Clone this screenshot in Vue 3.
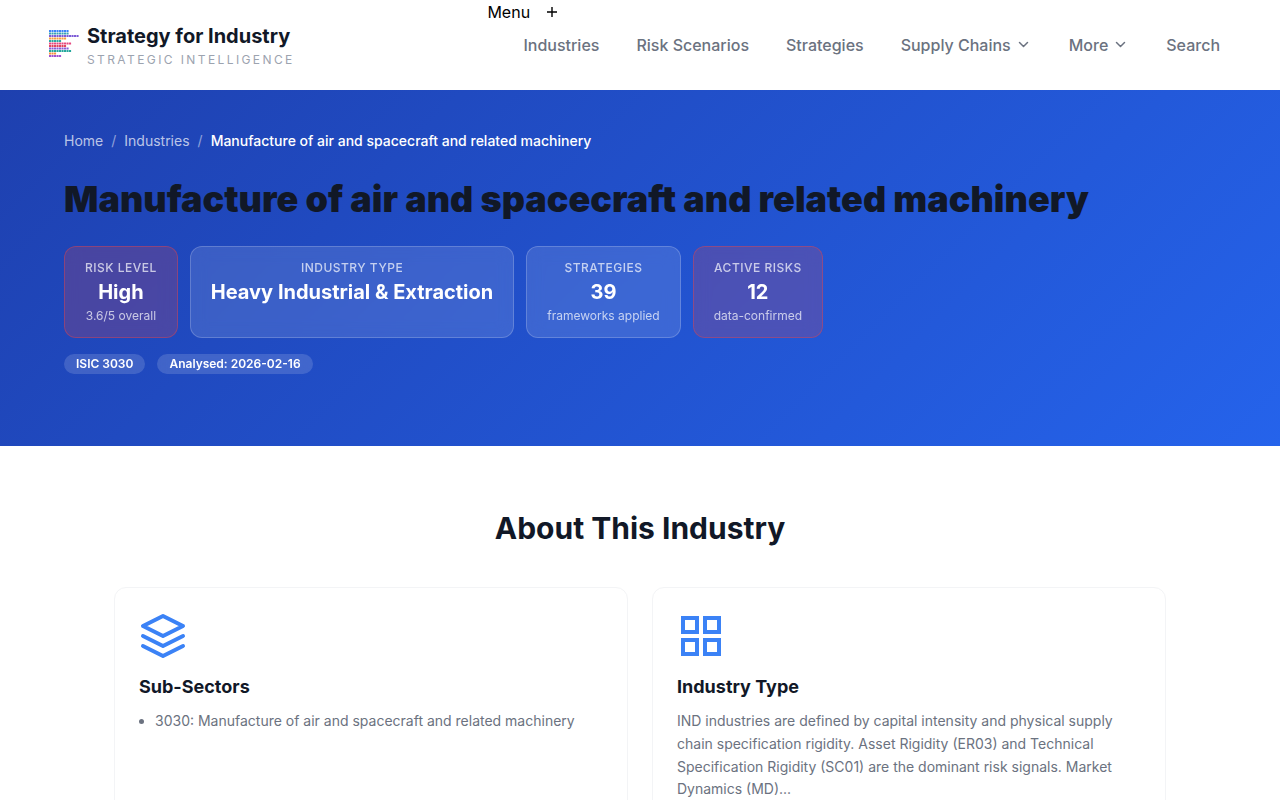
<script setup>
import { ref } from 'vue'

const menuOpen = ref(false)

const logoRows = [
  [8, '#3b82f6'],
  [8, '#38a3b8'],
  [12, '#7c5bd6'],
  [7, '#f59e42'],
  [5, '#2ba8a0'],
  [9, '#e64980'],
  [7, '#e0435c'],
  [8, '#8b5cd6'],
  [9, '#22a79c'],
  [3, '#f5923e'],
  [5, '#a050d0'],
]

const links = [
  { label: 'Industries' },
  { label: 'Risk Scenarios' },
  { label: 'Strategies' },
  { label: 'Supply Chains', menu: true },
  { label: 'More', menu: true },
  { label: 'Search' },
]

const stats = [
  { label: 'Risk Level', value: 'High', note: '3.6/5 overall', alert: true },
  { label: 'Industry Type', value: 'Heavy Industrial & Extraction' },
  { label: 'Strategies', value: '39', note: 'frameworks applied' },
  { label: 'Active Risks', value: '12', note: 'data-confirmed', alert: true },
]
</script>

<template>
  <header class="header">
    <a class="brand" href="#">
      <svg class="logo" viewBox="0 0 32 32" aria-hidden="true">
        <g v-for="([count, color], r) in logoRows" :key="r" :fill="color">
          <rect v-for="c in count" :key="c" :x="(c - 1) * 2.5 + 1" :y="r * 2.5 + 1" width="2.1" height="2.1" rx="0.3" />
        </g>
      </svg>
      <span class="brand-text">
        <span class="brand-name">Strategy for Industry</span>
        <span class="brand-tag">STRATEGIC INTELLIGENCE</span>
      </span>
    </a>
    <nav class="nav" aria-label="Main">
      <button class="menu-toggle" type="button" :aria-expanded="menuOpen" @click="menuOpen = !menuOpen">
        <span>Menu</span>
        <svg viewBox="0 0 12 12" width="12" height="12" aria-hidden="true">
          <path d="M6 1v10M1 6h10" stroke="currentColor" stroke-width="1.4" />
        </svg>
      </button>
      <ul class="links">
        <li v-for="link in links" :key="link.label">
          <button v-if="link.menu" type="button" class="link">
            {{ link.label }}
            <svg viewBox="0 0 15 12" width="15" height="12" fill="none" aria-hidden="true">
              <path d="M2.500 3.500l4 4 4-4" stroke="currentColor" stroke-width="1.5" stroke-linecap="round" stroke-linejoin="round" />
            </svg>
          </button>
          <a v-else class="link" href="#">{{ link.label }}</a>
        </li>
      </ul>
    </nav>
  </header>

  <main>
    <section class="hero">
      <nav class="crumbs" aria-label="Breadcrumb">
        <a href="#">Home</a>
        <span>/</span>
        <a href="#">Industries</a>
        <span>/</span>
        <strong>Manufacture of air and spacecraft and related machinery</strong>
      </nav>
      <h1>Manufacture of air and spacecraft and related machinery</h1>
      <div class="stats">
        <div v-for="s in stats" :key="s.label" class="stat" :class="{ alert: s.alert }">
          <span class="stat-label">{{ s.label }}</span>
          <span class="stat-value">{{ s.value }}</span>
          <span v-if="s.note" class="stat-note">{{ s.note }}</span>
        </div>
      </div>
      <div class="tags">
        <span class="tag">ISIC 3030</span>
        <span class="tag">Analysed: 2026-02-16</span>
      </div>
    </section>

    <section class="about">
      <h2>About This Industry</h2>
      <div class="cards">
        <article class="card">
          <svg class="icon" viewBox="0 0 24 24" aria-hidden="true">
            <path d="M12 2L2 7l10 5 10-5-10-5zM2 17l10 5 10-5M2 12l10 5 10-5" stroke-linecap="round" stroke-linejoin="round" />
          </svg>
          <h3>Sub-Sectors</h3>
          <ul class="bullets">
            <li>3030: Manufacture of air and spacecraft and related machinery</li>
          </ul>
        </article>
        <article class="card">
          <svg class="icon" viewBox="0 0 24 24" aria-hidden="true">
            <path d="M3 3h7v7H3zM14 3h7v7h-7zM14 14h7v7h-7zM3 14h7v7H3z" />
          </svg>
          <h3>Industry Type</h3>
          <p>
            IND industries are defined by capital intensity and physical supply chain specification
            rigidity. Asset Rigidity (ER03) and Technical Specification Rigidity (SC01) are the
            dominant risk signals. Market Dynamics (MD)...
          </p>
        </article>
      </div>
    </section>
  </main>
</template>

<style>
body {
  margin: 0;
  background: #fff;
  color: #111827;
  font-family: Inter, 'Liberation Sans', sans-serif;
  font-size: 16px;
  line-height: 24px;
}
</style>

<style scoped>
a {
  color: inherit;
  text-decoration: none;
}
button {
  padding: 0;
  border: 0;
  background: none;
  font: inherit;
  cursor: pointer;
}
.header {
  display: flex;
  justify-content: space-between;
  align-items: center;
  padding: 0 60px 0 48px;
}
.brand {
  display: flex;
  align-items: center;
  gap: 7px;
}
.logo {
  width: 32px;
  height: 32px;
}
.brand-text {
  display: flex;
  flex-direction: column;
  padding-top: 2px;
}
.brand-name {
  font-size: 20px;
  font-weight: 700;
  line-height: 28px;
}
.brand-tag {
  color: #9ca3af;
  font-size: 12px;
  line-height: 20px;
  letter-spacing: 0.2em;
}
.nav {
  padding-bottom: 24px;
}
.menu-toggle {
  display: flex;
  align-items: center;
  gap: 16px;
  margin-left: -36px;
  color: #000;
}
.links {
  display: flex;
  gap: 37px;
  margin: 0;
  padding: 0;
  list-style: none;
}
.link {
  display: flex;
  align-items: center;
  gap: 6px;
  color: #6b7280;
  font-weight: 500;
  line-height: 42px;
}
.hero {
  padding: 40px 64px 72px;
  background: linear-gradient(135deg, #1e40af 0%, #2563eb 100%);
  color: #fff;
}
.crumbs {
  display: flex;
  gap: 8px;
  font-size: 14px;
  line-height: 22px;
  color: rgba(255, 255, 255, 0.7);
}
.crumbs span {
  color: rgba(255, 255, 255, 0.5);
}
.crumbs strong {
  color: #fff;
  font-weight: 500;
}
h1 {
  margin: 24px 0;
  color: #111827;
  font-size: 36px;
  font-weight: 900;
  line-height: 46px;
}
.stats {
  display: flex;
  flex-wrap: wrap;
  gap: 12px;
}
.stat {
  display: flex;
  flex-direction: column;
  padding: 11px 20px;
  border: 1px solid rgba(255, 255, 255, 0.2);
  border-radius: 12px;
  background: rgba(255, 255, 255, 0.12);
  backdrop-filter: blur(8px);
  text-align: center;
}
.alert {
  border-color: rgba(239, 68, 68, 0.4);
  background: rgba(239, 68, 68, 0.2);
}
.stat-label {
  color: rgba(255, 255, 255, 0.7);
  font-size: 12px;
  font-weight: 500;
  line-height: 20px;
  letter-spacing: 0.5px;
  text-transform: uppercase;
}
.stat-value {
  font-size: 20px;
  font-weight: 700;
  line-height: 28px;
}
.stat-note {
  color: rgba(255, 255, 255, 0.7);
  font-size: 12px;
  line-height: 20px;
}
.tags {
  display: flex;
  gap: 12px;
  margin-top: 16px;
}
.tag {
  padding: 0 12px;
  border-radius: 10px;
  background: rgba(255, 255, 255, 0.15);
  backdrop-filter: blur(8px);
  font-size: 12px;
  font-weight: 600;
  line-height: 20px;
}
.about {
  padding: 64px 24px;
}
h2 {
  margin: 0 0 40px;
  font-size: 30px;
  font-weight: 700;
  line-height: 37px;
  text-align: center;
}
.cards {
  display: grid;
  grid-template-columns: repeat(2, 1fr);
  gap: 24px;
  max-width: 1052px;
  margin: 0 auto;
}
.card {
  padding: 24px;
  border: 1px solid #f3f4f6;
  border-radius: 12px;
  color: #6b7280;
  font-size: 14px;
  line-height: 1.625;
}
.icon {
  display: block;
  width: 48px;
  height: 48px;
  fill: none;
  stroke: #3b82f6;
  stroke-width: 2;
}
h3 {
  margin: 16px 0 12px;
  color: #111827;
  font-size: 18px;
  font-weight: 700;
  line-height: 22px;
}
.card p {
  margin: 0;
}
.bullets {
  margin: 0;
  padding-left: 16px;
}
</style>
